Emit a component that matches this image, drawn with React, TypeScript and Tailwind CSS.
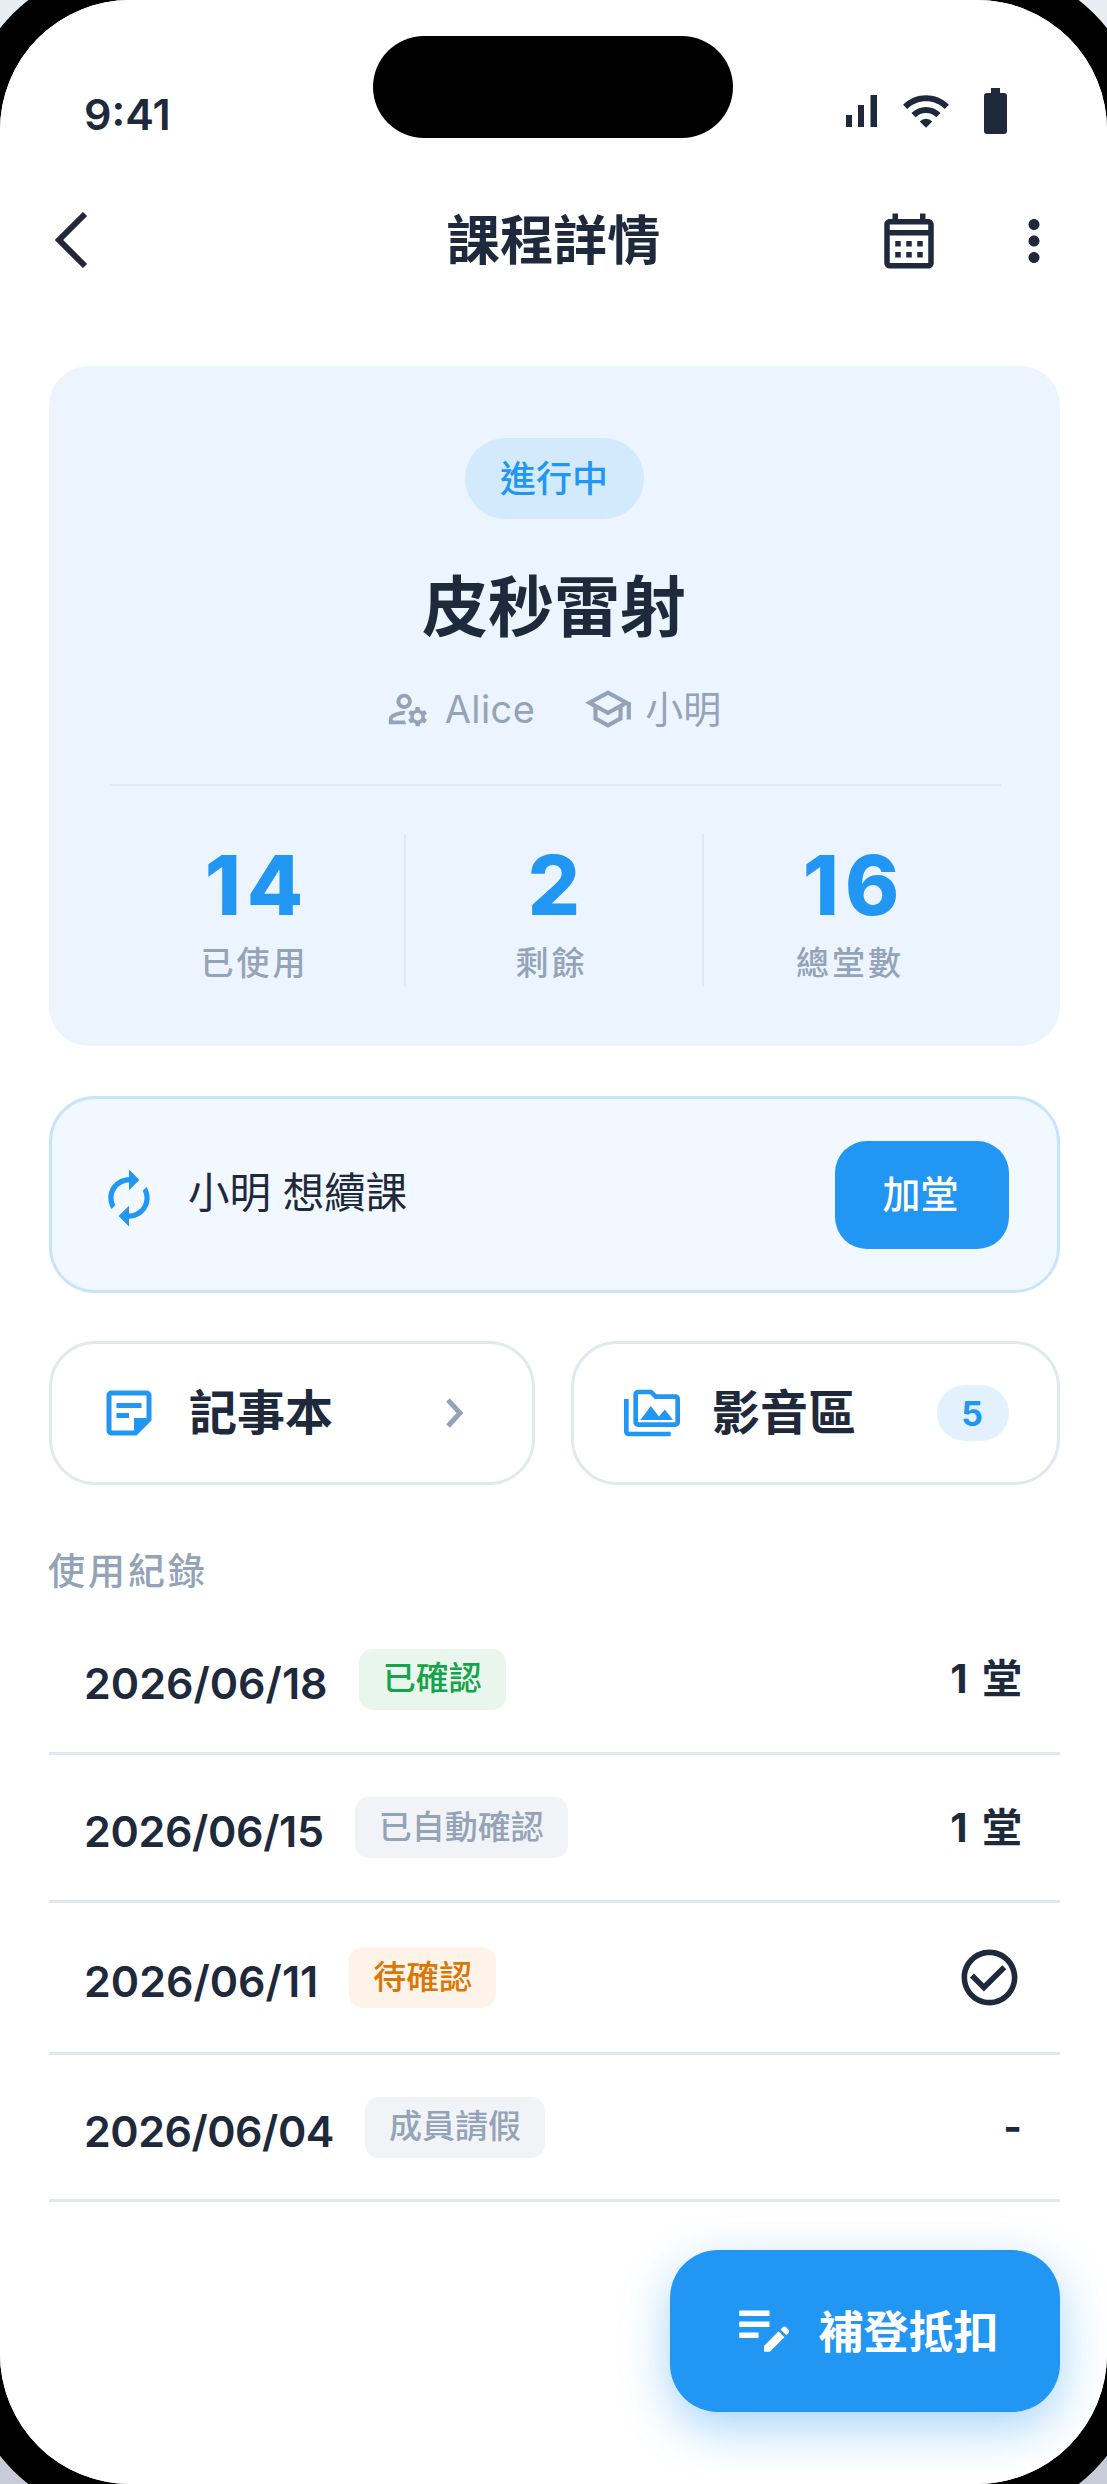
import React from 'react';
import {
    MdWifi,
    MdOutlineCalendarMonth,
    MdMoreVert,
    MdOutlineManageAccounts,
    MdOutlineSchool,
    MdAutorenew,
    MdOutlineStickyNote2,
    MdOutlinePermMedia,
    MdCheckCircleOutline,
    MdEditNote,
} from 'react-icons/md';

const records = [
    { date: '2026/06/18', dateClass: '', status: '已確認', badge: 'bg-[#e9f6ee] text-[#16a34a]', value: '1 堂', rowClass: 'h-[149px]' },
    { date: '2026/06/15', dateClass: 'tracking-[-0.35px]', status: '已自動確認', badge: 'bg-[#f1f3f6] text-[#94a3b8]', value: '1 堂', rowClass: 'h-[148px]' },
    { date: '2026/06/11', dateClass: '', status: '待確認', badge: 'bg-[#fdf3e9] text-[#d97706]', value: 'check', rowClass: 'h-[152px]' },
    { date: '2026/06/04', dateClass: 'tracking-[-0.5px]', status: '成員請假', badge: 'bg-[#f1f3f6] text-[#94a3b8]', value: '-', rowClass: 'h-[147px]' },
];

const stats = [
    { value: '14', label: '已使用', numClass: '' },
    { value: '2', label: '剩餘', numClass: 'pl-[6px]' },
    { value: '16', label: '總堂數', numClass: 'pl-[3px]' },
];

const App: React.FC = () => {
    return (
        <div
            className="w-[1107px] h-[2484px] overflow-hidden bg-linear-to-b from-[#e8edf4] to-[#c8ccd8] text-[#1e293b]"
            style={{ fontFamily: 'Inter, "Noto Sans CJK TC", sans-serif' }}
        >
            <div className="-m-[35px] w-[1177px] h-[2554px] border-[35px] border-black rounded-[165px] bg-white">
                <div className="relative w-full h-full rounded-[130px] bg-white overflow-hidden">
                    {/* Dynamic island */}
                    <div className="absolute top-[36px] left-[373px] w-[360px] h-[102px] rounded-full bg-black" />

                    {/* Status bar */}
                    <div className="h-[150px] pt-[78px] pl-[84px] pr-[100px]">
                        <div className="flex h-[72px] items-center justify-between">
                            <span className="text-[43px] font-semibold leading-none">9:41</span>
                            <div className="-mt-[6px] flex items-center">
                                <svg width="31" height="32" viewBox="0 0 31 32" fill="currentColor">
                                    <rect x="0" y="20" width="6" height="12" />
                                    <rect x="12" y="10" width="6" height="22" />
                                    <rect x="24.5" y="0" width="6.5" height="32" />
                                </svg>
                                <MdWifi size={50} className="ml-[24px]" />
                                <svg width="23" height="46" viewBox="0 0 23 46" fill="currentColor" className="ml-[33px]">
                                    <path d="M7 0h9v5h4a3 3 0 0 1 3 3v35a3 3 0 0 1-3 3H3a3 3 0 0 1-3-3V8a3 3 0 0 1 3-3h4z" />
                                </svg>
                            </div>
                        </div>
                    </div>

                    {/* Header */}
                    <div className="relative flex h-[182px] items-center justify-center">
                        <svg width="40" height="60" viewBox="0 0 40 60" fill="none" stroke="currentColor" strokeWidth="6" className="absolute left-[51px] top-[60px]">
                            <path d="M34 4 L8 30 L34 56" />
                        </svg>
                        <h1 className="text-[53.5px] font-bold leading-none">課程詳情</h1>
                        <MdOutlineCalendarMonth size={66} className="absolute left-[876px] top-[58px]" />
                        <MdMoreVert size={66} className="absolute left-[1001px] top-[58px]" />
                    </div>

                    <main className="pl-[49px] pr-[47px] pt-[34px]">
                        {/* Course card */}
                        <section className="flex h-[680px] flex-col items-center rounded-[40px] bg-[#ebf4ff] pl-[61px] pr-[59px] pt-[72px]">
                            <div className="mr-[3px] flex h-[81px] w-[179px] items-center justify-center rounded-full bg-[#d3e9fc] text-[36px] font-medium text-[#2196f3]">
                                進行中
                            </div>
                            <h2 className="mr-[3px] mt-[48px] text-[66px] font-bold leading-[80px]">皮秒雷射</h2>
                            <div className="mr-[5px] mt-[37px] flex h-[50px] items-center text-[38px] text-[#94a3b8]">
                                <MdOutlineManageAccounts size={46} />
                                <span className="ml-[14px] tracking-[0.4px]">Alice</span>
                                <MdOutlineSchool size={50} className="ml-[48px]" />
                                <span className="ml-[12px]">小明</span>
                            </div>
                            <div className="mt-[50px] h-[2px] w-full bg-[#e2e8f0]" />
                            <div className="mt-[48px] grid h-[153px] w-full grid-cols-[294px_298px_299px]">
                                {stats.map((stat, i) => (
                                    <div
                                        key={stat.label}
                                        className={`flex flex-col items-center ${i > 0 ? 'border-l-2 border-[#e2e8f0]' : ''}`}
                                    >
                                        <span className={`mt-[10px] text-[82px] font-extrabold leading-[84px] tracking-[6px] text-[#2196f3] ${stat.numClass}`}>
                                            {stat.value}
                                        </span>
                                        <span className="mr-[5px] mt-[13px] text-[33px] font-medium tracking-[3px] leading-[44px] text-[#94a3b8]">
                                            {stat.label}
                                        </span>
                                    </div>
                                ))}
                            </div>
                        </section>

                        {/* Renew request */}
                        <section className="mt-[50px] flex h-[197px] items-center justify-between rounded-[46px] border-[3px] border-[#c8e4fb] bg-[#f1f8ff] pl-[46px] pr-[48px]">
                            <div className="flex items-center">
                                <MdAutorenew size={62} className="mt-[6px] text-[#2196f3]" />
                                <span className="-mt-[2px] ml-[28px] text-[41.5px]">小明 想續課</span>
                            </div>
                            <button className="flex h-[108px] w-[174px] items-center justify-center rounded-[32px] bg-[#2196f3] pr-[3px] text-[38px] font-medium text-white">
                                加堂
                            </button>
                        </section>

                        {/* Links */}
                        <div className="mt-[48px] grid h-[144px] grid-cols-[486px_489px] justify-between">
                            <div className="flex items-center rounded-[46px] border-[3px] border-[#e2e8f0] pl-[47px]">
                                <MdOutlineStickyNote2 size={60} className="text-[#2196f3]" />
                                <span className="ml-[30px] text-[48px] font-bold">記事本</span>
                                <svg width="19" height="32" viewBox="0 0 19 32" fill="none" stroke="currentColor" strokeWidth="5" className="ml-[112px] text-[#94a3b8]">
                                    <path d="M3 3 L15 16 L3 29" />
                                </svg>
                            </div>
                            <div className="flex items-center rounded-[46px] border-[3px] border-[#e2e8f0] pl-[50px]">
                                <MdOutlinePermMedia size={56} className="text-[#2196f3]" />
                                <span className="ml-[32px] text-[48px] font-bold">影音區</span>
                                <span className="ml-[81px] flex h-[56px] w-[72px] items-center justify-center rounded-full bg-[#e3f1fe] pr-[2px] text-[34px] font-bold text-[#2196f3]">
                                    5
                                </span>
                            </div>
                        </div>

                        {/* Records */}
                        <h3 className="-ml-[1px] mt-[62px] text-[37px] font-medium leading-[50px] tracking-[3px] text-[#94a3b8]">使用紀錄</h3>
                        <div className="mt-[9px]">
                            {records.map((record) => (
                                <div
                                    key={record.date}
                                    className={`flex items-center justify-between border-b-[3px] border-[#e2e8f0] px-[35px] ${record.rowClass}`}
                                >
                                    <div className="flex items-center">
                                        <span className={`mt-[8px] text-[43px] font-semibold leading-none ${record.dateClass}`}>{record.date}</span>
                                        <span className={`ml-[31px] flex h-[61px] items-center rounded-[14px] px-[24px] text-[33px] font-medium ${record.badge}`}>
                                            {record.status}
                                        </span>
                                    </div>
                                    {record.value === 'check' ? (
                                        <MdCheckCircleOutline size={67} className="mr-[2px]" />
                                    ) : (
                                        <span className="mr-[3px] text-[40px] font-bold [word-spacing:5px]">{record.value}</span>
                                    )}
                                </div>
                            ))}
                        </div>
                    </main>

                    {/* Floating button */}
                    <button className="absolute left-[670px] top-[2250px] flex h-[162px] w-[390px] items-center justify-center rounded-[48px] bg-[#2196f3] text-[45px] font-semibold text-white shadow-[0_16px_48px_rgba(33,150,243,0.4)]">
                        <MdEditNote size={66} className="-mt-[8px]" />
                        <span className="ml-[21px] mt-[4px]">補登抵扣</span>
                    </button>
                </div>
            </div>
        </div>
    );
};

export default App;
